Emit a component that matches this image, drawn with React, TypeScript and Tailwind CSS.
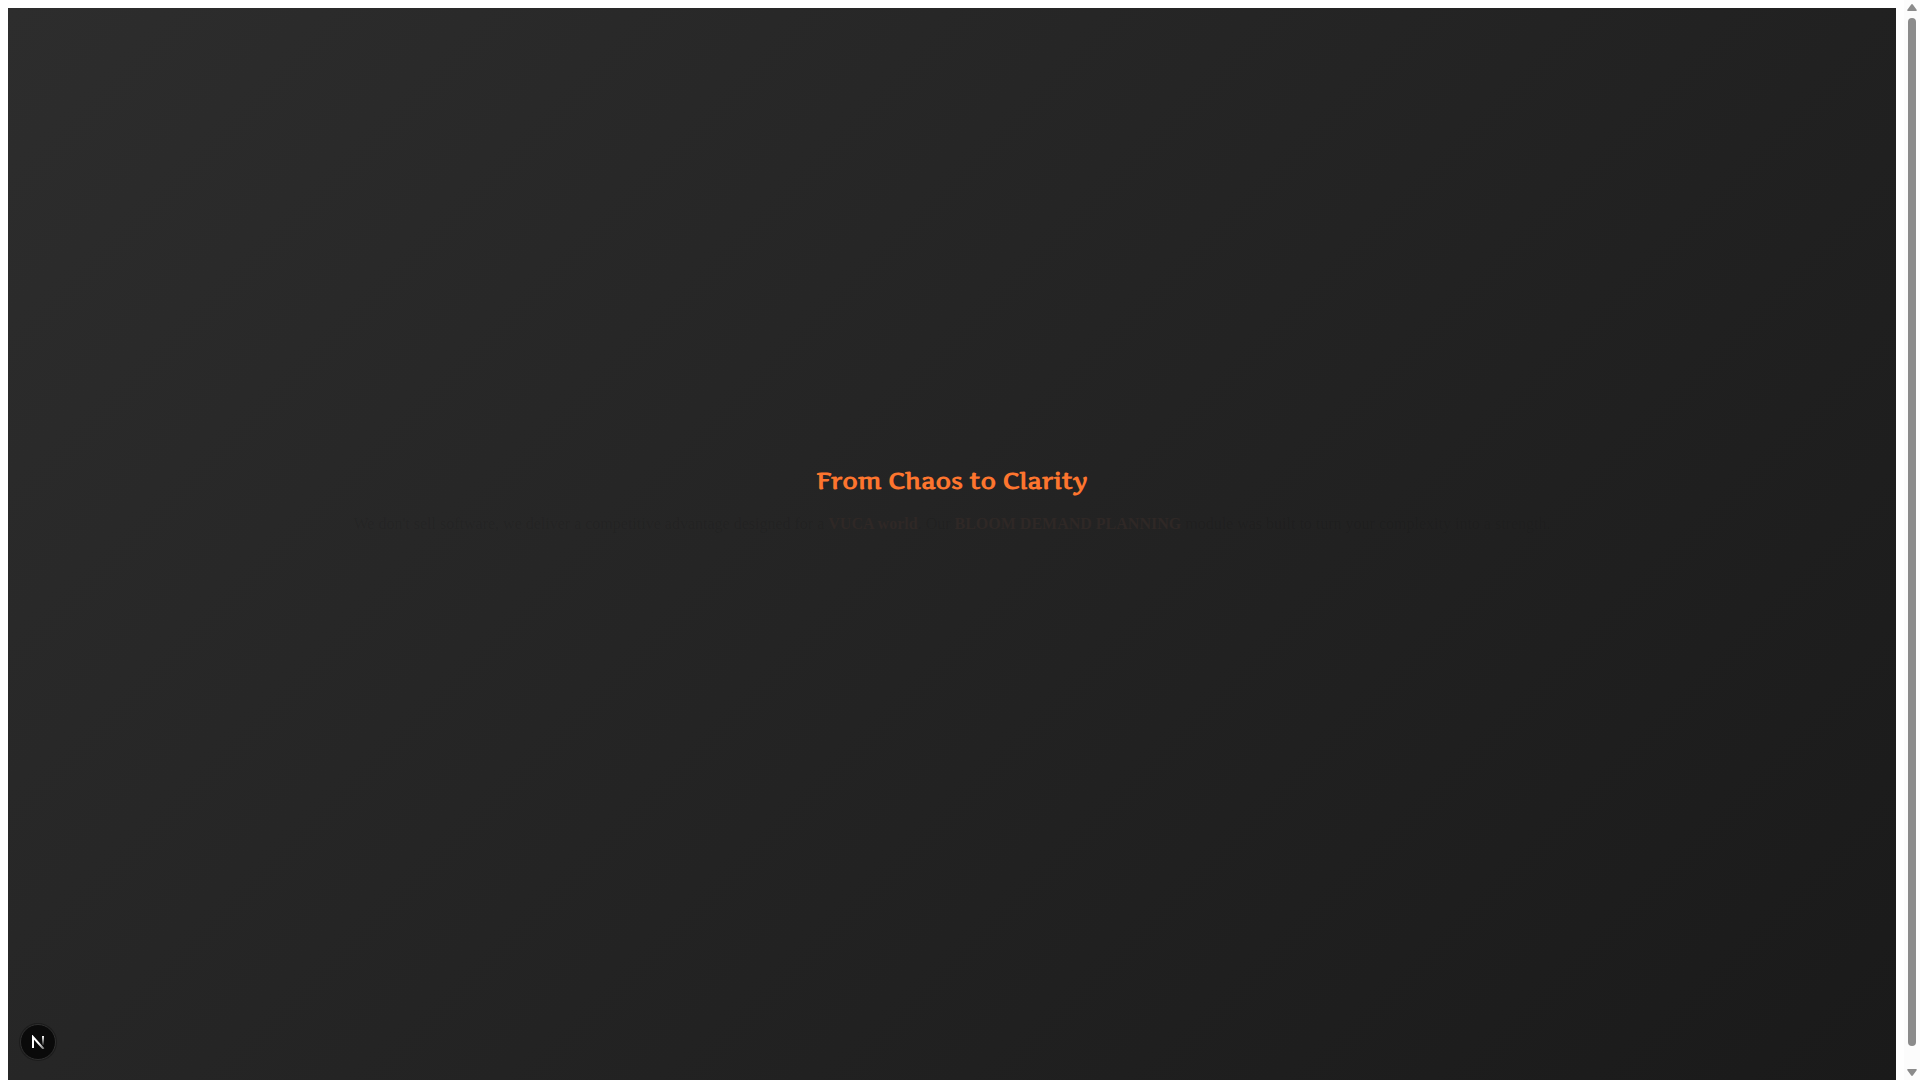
export default function App() {
  return (
    <div className="flex h-screen bg-white">
      <main className="mt-2 ml-2 flex flex-1 flex-col items-center bg-[linear-gradient(135deg,#2d2d2d_0%,#1a1a1a_100%)] pt-[452px] text-center">
        <h1 className="font-['Artifika','Noto_Serif',serif] text-2xl leading-[42px] font-bold text-[#fd752e]">
          From Chaos to Clarity
        </h1>
        <p className="mt-2 font-['Liberation_Serif',serif] text-base leading-7 text-black/8">
          We don't sell software, we deliver a competitive advantage designed for a{" "}
          <strong className="text-[#2f2826]">VUCA world</strong>. Our{" "}
          <strong className="text-[#2f2826]">BLOOM DEMAND PLANNING</strong> module was built to turn your complexity into a strength.
        </p>
      </main>
      <div aria-hidden="true" className="ml-2 flex w-4 flex-col items-center justify-between bg-[#fcfcfc] py-1">
        <svg className="h-2 w-[10px]" viewBox="0 0 10 8" fill="#8b8b8b">
          <path d="M4 .8Q5-.6 6 .8L9.8 6Q10 7 9 7H1Q0 7 .2 6Z" />
        </svg>
        <div className="mt-1.5 mb-[22px] w-2 flex-1 rounded-full bg-[#8b8b8b]" />
        <svg className="h-2 w-[10px]" viewBox="0 0 10 8" fill="#8b8b8b">
          <path d="M4 7.2Q5 8.6 6 7.2L9.8 2Q10 1 9 1H1Q0 1 .2 2Z" />
        </svg>
      </div>
      <button
        aria-label="Open developer tools"
        className="fixed bottom-5 left-5 flex size-9 items-center justify-center rounded-full border border-[#303030] bg-[#0a0a0a] shadow-[0_0_0_1px_#1c1c1c]"
      >
        <svg className="size-[14px]" viewBox="0 0 14 14" fill="none">
          <defs>
            <linearGradient id="stem" x1="0" y1="1" x2="0" y2="11" gradientUnits="userSpaceOnUse">
              <stop stopColor="white" />
              <stop offset="1" stopColor="white" stopOpacity="0" />
            </linearGradient>
            <linearGradient id="diagonal" x1="8" y1="8" x2="13" y2="14" gradientUnits="userSpaceOnUse">
              <stop stopColor="white" />
              <stop offset="1" stopColor="white" stopOpacity="0.4" />
            </linearGradient>
          </defs>
          <path d="M2 13V2L12.6 14" stroke="url(#diagonal)" strokeWidth="2" />
          <path d="M11 1H13V10H11Z" fill="url(#stem)" />
        </svg>
      </button>
    </div>
  );
}
